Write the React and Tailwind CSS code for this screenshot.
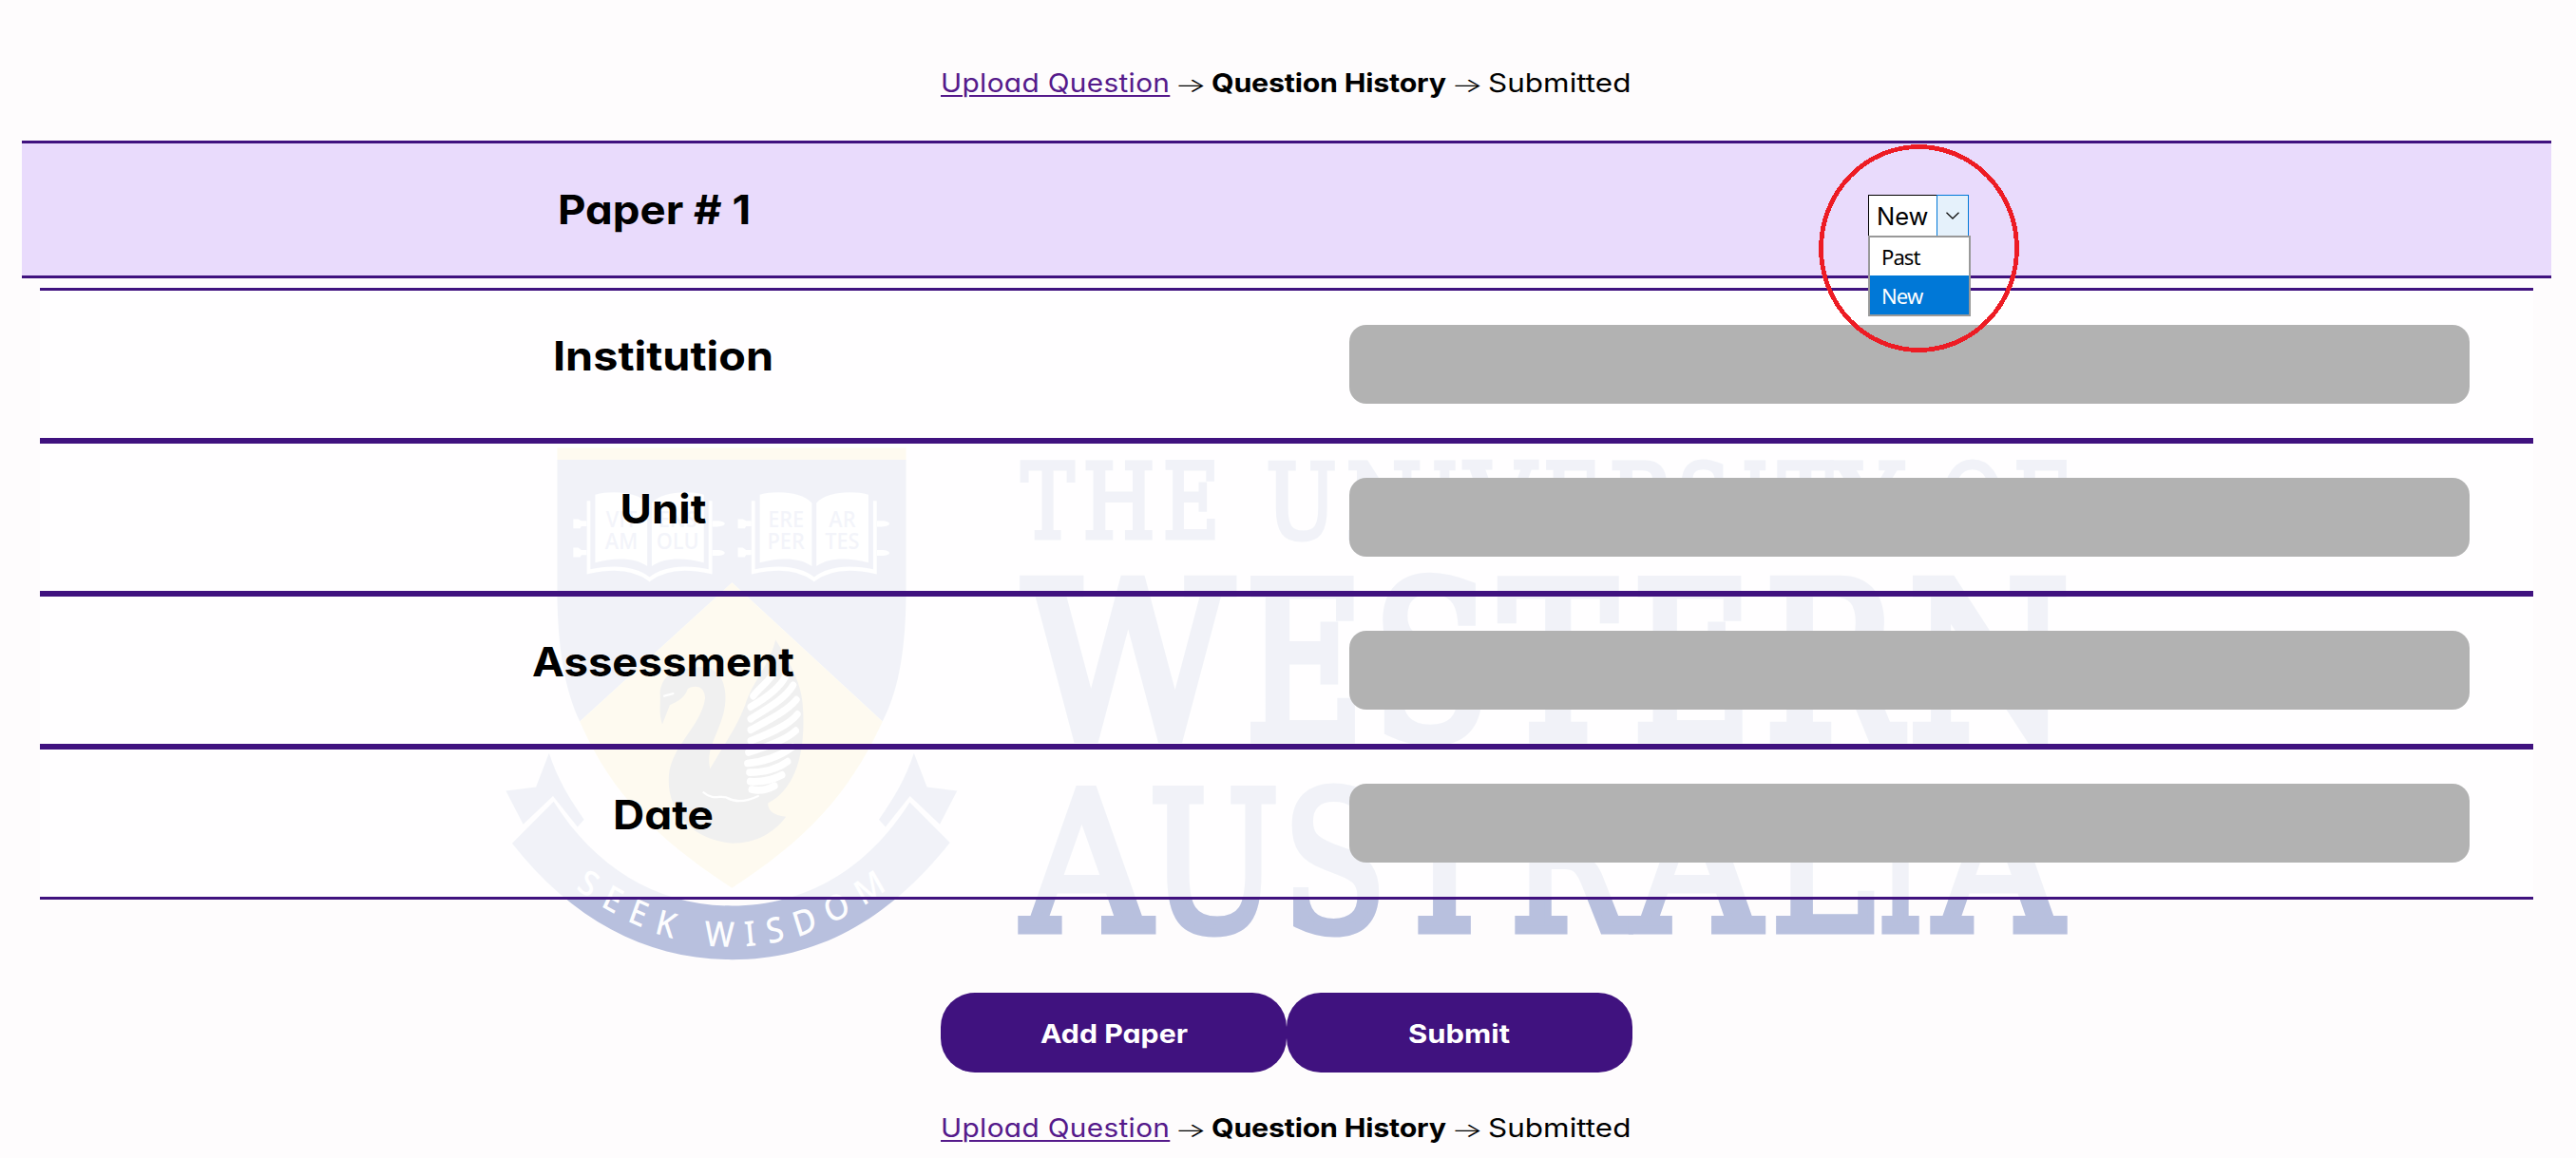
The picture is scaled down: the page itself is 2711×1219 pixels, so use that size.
const BODY = "font-['Inter',sans-serif] [font-feature-settings:'cv11']";

const NAVY = "#b8c0de";
const GOLD = "#fae8b2";

function Book({ x, words }) {
  return (
    <g transform={`translate(${x} 0)`}>
      <g fill="none" stroke="#fefefe" strokeWidth="11">
        <path d="M-186 228V423C-110 408 -45 412 0 444C45 412 110 408 186 423V228" />
      </g>
      <g fill="#fefefe">
        <path d="M-166 211C-110 198 -35 205 -7 234V408C-45 382 -110 384 -166 398Z" />
        <path d="M166 211C110 198 35 205 7 234V408C45 382 110 384 166 398Z" />
        <path d="M-233 278H-218L-208 283H-192V298H-208L-212 304H-233Z" />
        <path d="M-233 357H-218L-208 363H-192V377H-208L-212 383H-233Z" />
        <path d="M192 283H206C222 283 230 288 230 291C230 295 222 299 206 299H192Z" />
        <path d="M192 363H206C222 363 230 367 230 371C230 375 222 379 206 379H192Z" />
      </g>
      <g fill="#c3cae4" fontFamily="'Open Sans', sans-serif" fontWeight="600" fontSize="63" textAnchor="middle">
        <text x="-86" y="300">{words[0]}</text>
        <text x="86" y="300">{words[1]}</text>
        <text x="-86" y="360">{words[2]}</text>
        <text x="86" y="360">{words[3]}</text>
      </g>
    </g>
  );
}

function Crest() {
  const tail = "M94 1026L186 1015L226 922C250 990 290 1050 333 1105L313 1125L238 1040L147 1118Z";
  const feathers = [
    "M850 765C870 740 900 725 912 700",
    "M842 795C880 775 930 745 948 712",
    "M842 828C890 800 945 775 972 735",
    "M842 858C900 830 955 805 982 775",
    "M842 888C900 868 960 845 985 815",
    "M835 920C890 905 950 885 980 860",
    "M832 950C890 945 940 925 970 905",
    "M838 975C880 975 925 965 955 945",
    "M840 1000C880 1003 910 995 938 982",
    "M845 1022C875 1028 895 1022 915 1012",
  ];
  return (
    <g transform="translate(500 440) scale(0.34439 0.38265)">
      <path d="M251 82H1317V116H251Z" fill={GOLD} />
      <path d="M251 115H1317V490C1315 620 1300 740 1245 835L785 453L320 835C270 740 253 620 251 490Z" fill={NAVY} />
      <path d="M785 453L1245 835C1140 1040 1010 1160 785 1293C560 1160 420 1040 320 835Z" fill={GOLD} />
      <Book x={533} words={["VIT", "ENS", "AM", "OLU"]} />
      <Book x={1036} words={["ERE", "AR", "PER", "TES"]} />
      <path
        d="M565 755C570 715 600 690 650 690C720 672 765 700 765 770C765 850 700 900 718 965C760 900 800 850 825 790C850 720 900 680 918 610C960 670 1000 730 1002 800C1010 920 980 1020 895 1060C895 1080 910 1093 950 1097C915 1140 860 1170 785 1170C660 1160 585 1080 592 985C600 900 690 850 703 770C700 735 670 735 650 745C640 775 605 785 595 790L572 843C560 810 568 790 565 755Z"
        fill="#b4b4b4"
      />
      <g fill="none" stroke="#ffffff" strokeLinecap="round">
        {feathers.map((d) => (
          <path key={d} d={d} strokeWidth="20" />
        ))}
        <path d="M698 1030C730 1055 750 1035 770 1045C800 1060 830 1055 865 1040" strokeWidth="6" />
        <path d="M578 765L605 758" strokeWidth="6" />
      </g>
      <path d={tail} fill={NAVY} />
      <path d={tail} fill={NAVY} transform="translate(1567 0) scale(-1 1)" />
      <path
        d="M113 1170L240 1055C370 1240 560 1342 785 1342C1010 1342 1200 1240 1328 1057L1451 1168C1260 1385 1040 1490 785 1490C530 1490 300 1385 113 1170Z"
        fill={NAVY}
      />
      <path id="motto" d="M300 1290Q785 1620 1270 1290" fill="none" />
      <text fill="#fdfdfe" fontFamily="'Noto Sans', sans-serif" fontWeight="500" fontSize="96" letterSpacing="30">
        <textPath href="#motto" startOffset="8" textLength="1050" lengthAdjust="spacing">
          SEEK WISDOM
        </textPath>
      </text>
    </g>
  );
}

const WORDS = [
  { y: 565.5, size: 108, stroke: 5, pad: 2.5, glyphs: [["T", 43, 123], ["H", 136, 230], ["E", 248, 320]] },
  {
    y: 565.5, size: 108, stroke: 5, pad: 2.5,
    glyphs: [["U", 392, 484], ["N", 504, 603], ["I", 624, 653], ["V", 664, 768], ["E", 780, 852], ["R", 872, 955], ["S", 967, 1034], ["I", 1058, 1087], ["T", 1102, 1184], ["Y", 1180, 1281]],
  },
  { y: 565.5, size: 108, stroke: 5, pad: 2.5, glyphs: [["O", 1335, 1418], ["F", 1438, 1507]] },
  {
    y: 777, size: 226, stroke: 11, pad: 4,
    glyphs: [["W", 43, 348], ["E", 365, 520], ["S", 543, 697], ["T", 709, 885], ["E", 907, 1062], ["R", 1091, 1268], ["N", 1292, 1507]],
  },
  {
    y: 979, size: 203, stroke: 9, pad: 4,
    glyphs: [["A", 43, 232], ["U", 230, 402], ["S", 417, 552], ["T", 558, 718], ["R", 735, 887], ["A", 897, 1085], ["L", 1100, 1234], ["I", 1250, 1302], ["A", 1319, 1507]],
  },
];

const FULL_WIDTH = "WVAYT";

function Wordmark() {
  return (
    <g fill={NAVY} stroke={NAVY} fontFamily="'DejaVu Serif', serif">
      {WORDS.map((w, i) => (
        <text key={i} y={w.y} fontSize={w.size} strokeWidth={w.stroke}>
          {w.glyphs.map(([c, a, b], j) => {
            const pad = FULL_WIDTH.includes(c) ? -w.stroke / 2.2 : w.pad;
            return (
              <tspan key={j} x={1040 + a / 1.329 - pad} textLength={(b - a) / 1.329 + 2 * pad} lengthAdjust="spacingAndGlyphs">
                {c}
              </tspan>
            );
          })}
        </text>
      ))}
    </g>
  );
}

function Arrow() {
  return (
    <span className="w-[44px] text-center font-light">
      <span className="inline-block translate-y-[2px] scale-x-[1.3] scale-y-[0.75]">→</span>
    </span>
  );
}

function Breadcrumb() {
  return (
    <nav className="mx-auto flex h-10 w-[728px] items-center text-[27.5px] leading-10 whitespace-nowrap text-black">
      <a className="w-[241px] tracking-[0.3px] text-[#551a8b]">
        <span className="inline-block origin-left scale-x-[1.084] underline decoration-[1.5px] underline-offset-[3px]">Upload Question</span>
      </a>
      <Arrow />
      <b className="w-[247px] font-bold tracking-[-0.2px]">
        <span className="inline-block origin-left scale-x-[1.105]">Question History</span>
      </b>
      <Arrow />
      <span className="inline-block origin-left scale-x-[1.145]">Submitted</span>
    </nav>
  );
}

function Row({ label, stretch }) {
  return (
    <div className="grid h-[161px] grid-cols-2 border-y-3 border-[#40127f] bg-white/80">
      <h2 className={`pt-[43px] text-center text-[42.6px] leading-[51px] font-bold ${stretch}`}>{label}</h2>
      <div className="mt-9 mr-[67px] ml-[66px] h-[83px] rounded-[18px] bg-[#b2b2b2]" />
    </div>
  );
}

function TypeSelect() {
  return (
    <div className="relative mt-[54px] mr-px h-[44px] w-[106px]">
      <div className="flex h-full bg-white">
        <div className="w-[72px] border border-r-0 border-black pt-px pl-[8px] text-[25.5px] leading-[42px]">New</div>
        <div className="flex w-[34px] items-center justify-center border border-[#0078d7] bg-[#e5f1fb]">
          <svg width="14" height="8" viewBox="0 0 14 8" fill="none" stroke="#111" strokeWidth="1.3">
            <path d="M0.5 0.7L7 7L13.5 0.7" />
          </svg>
        </div>
      </div>
      <ul className="absolute top-[43px] left-0 z-10 w-[108px] border-2 border-[#999] bg-white font-['Noto_Sans',sans-serif] text-[22px] tracking-[-0.9px]">
        <li className="h-10 pl-[12px] leading-[41px]">Past</li>
        <li className="h-[41px] bg-[#0078d7] pl-[12px] leading-[43px] text-white">New</li>
      </ul>
      <svg className="absolute top-[-54px] left-[-53px] z-20" width="213" height="221" viewBox="0 0 213 221" shapeRendering="crispEdges">
        <ellipse cx="106.5" cy="110.5" rx="103" ry="107" fill="none" stroke="#ed1c24" strokeWidth="4.8" />
      </svg>
    </div>
  );
}

export default function App() {
  return (
    <div className={`relative isolate flex h-[1219px] w-[2711px] flex-col overflow-hidden bg-[#fefcfd] text-black ${BODY}`}>
      <svg className="absolute inset-0 -z-10" width="2711" height="1219" viewBox="0 0 2711 1219">
        <Crest />
        <Wordmark />
      </svg>
      <div className="w-[2708px] pt-[67px]">
        <Breadcrumb />
      </div>
      <header className="mt-[41px] ml-[23px] grid h-[145px] w-[2662px] grid-cols-2 border-y-3 border-[#40127f] bg-[#e9dbfc]">
        <h1 className="scale-x-[1.07] pt-[44px] text-center text-[42.6px] leading-[51px] font-bold">Paper # 1</h1>
        <div className="flex justify-center">
          <TypeSelect />
        </div>
      </header>
      <main className="mt-[10px] ml-[42px] w-[2624px]">
        <Row label="Institution" stretch="scale-x-[1.098]" />
        <Row label="Unit" stretch="scale-x-[1.07]" />
        <Row label="Assessment" stretch="scale-x-[1.068]" />
        <Row label="Date" stretch="scale-x-[1.08]" />
      </main>
      <div className="mt-[98px] flex w-[2708px] justify-center text-[27.5px] font-bold text-white">
        <button className="h-[84px] w-[364px] rounded-[36px] bg-[#40127f] pt-[3px]">
          <span className="inline-block scale-x-[1.1]">Add Paper</span>
        </button>
        <button className="h-[84px] w-[364px] rounded-[36px] bg-[#40127f] pt-[3px]">
          <span className="inline-block scale-x-[1.125]">Submit</span>
        </button>
      </div>
      <div className="w-[2708px] pt-[38px]">
        <Breadcrumb />
      </div>
    </div>
  );
}
